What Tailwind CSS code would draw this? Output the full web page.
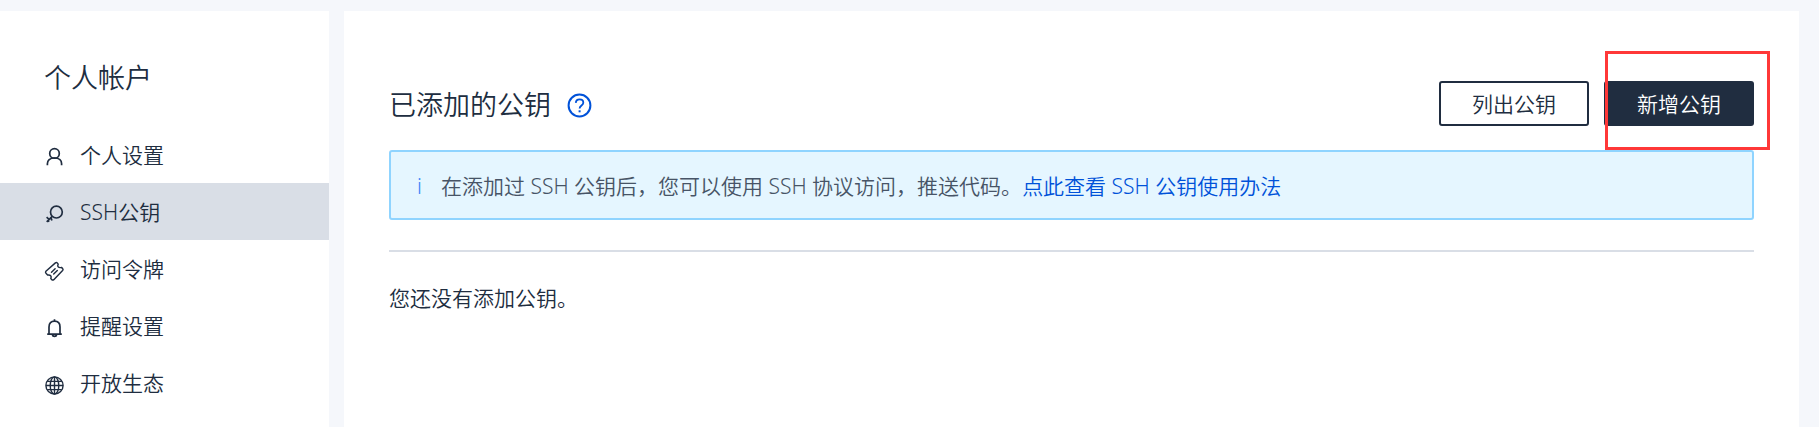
<!DOCTYPE html>
<html lang="zh-CN">
<head>
<meta charset="utf-8">
<title>SSH公钥</title>
<script src="https://cdn.jsdelivr.net/npm/@tailwindcss/browser@4"></script>
</head>
<body class="flex h-[427px] gap-[15px] overflow-hidden bg-[#f5f7fb] pt-[11px] pr-5 font-['Noto_Sans','Noto_Sans_CJK_SC',sans-serif] text-[21px] leading-[28px] font-[350] text-[#202d40]">
<aside class="w-[329px] shrink-0 bg-white">
  <h1 class="flex h-[115px] items-center pt-[19px] pl-[44px] text-[27px]">个人帐户</h1>
  <nav class="flex flex-col">
    <a class="flex h-[57px] items-center gap-[15px] pl-[44px]">
      <svg class="mt-[6px] size-[21px] shrink-0" viewBox="0 0 21 21" fill="none" stroke="currentColor" stroke-width="1.7"><circle cx="10.5" cy="6.4" r="4.8"/><path d="M3.4 18.2v-1.4c0-3.2 2.3-5.8 7.1-5.8s7.1 2.6 7.1 5.8v1.4"/></svg>
      <span>个人设置</span>
    </a>
    <a class="flex h-[57px] items-center gap-[15px] bg-[#d9dee6] pl-[44px]">
      <svg class="mt-[5px] size-[21px] shrink-0" viewBox="0 0 21 21" fill="none" stroke="currentColor" stroke-width="1.7"><circle cx="12.4" cy="8.1" r="5.9"/><path d="M8.2 12.3L2.7 17.8M5.1 15.4l-2.5-2.2M7.1 13.9l.8 2.7M4.1 16.2l.8 1.6"/></svg>
      <span>SSH公钥</span>
    </a>
    <a class="flex h-[57px] items-center gap-[15px] pl-[44px]">
      <svg class="mt-[5px] size-[21px] shrink-0" viewBox="0 0 21 21" fill="none" stroke="currentColor" stroke-width="1.45" stroke-linejoin="round" stroke-linecap="round"><path d="M1.9 10.2L11.4 1.9Q12.6 1.1 13.4 2.1L14.2 3.1Q13.2 5 14.3 6T17.4 6.4L18.7 7.6Q19.5 8.6 18.6 9.6L9.8 18.7Q8.7 19.5 7.8 18.7L6.8 17.6Q7.6 15.7 6.7 14.7T3.6 14L2 12.3Q1.1 11.2 1.9 10.2zM7.5 11.2l3.6-3.4M9.7 13.1l3.6-3.5"/></svg>
      <span>访问令牌</span>
    </a>
    <a class="flex h-[57px] items-center gap-[15px] pl-[44px]">
      <svg class="mt-[5px] size-[21px] shrink-0" viewBox="0 0 21 21" fill="none" stroke="currentColor" stroke-width="1.7"><path d="M5 16V8.9c0-3.6 2.1-5.7 5.5-5.7S16 5.3 16 8.9V16M3.2 16.2h14.6M10.5 3.2V1.3M8.3 16.5c.4 2.5 4 2.5 4.4 0"/></svg>
      <span>提醒设置</span>
    </a>
    <a class="flex h-[57px] items-center gap-[15px] pl-[44px]">
      <svg class="mt-[5px] size-[21px] shrink-0" viewBox="0 0 21 21" fill="none" stroke="currentColor" stroke-width="1.4"><circle cx="10.5" cy="10.5" r="8.6"/><ellipse cx="10.5" cy="10.5" rx="4.3" ry="8.6"/><path d="M10.5 2v17M2 10.5h17M3.2 6.4h14.6M3.2 14.6h14.6"/></svg>
      <span>开放生态</span>
    </a>
  </nav>
</aside>
<main class="relative flex-1 bg-white px-[45px] pt-[70px]">
  <header class="flex h-[45px] items-center">
    <h2 class="pt-[2px] text-[27px] leading-[36px]">已添加的公钥</h2>
    <svg class="mt-[3px] ml-[16px] size-[25px]" viewBox="0 0 25 25" fill="none" stroke="#0052d9" stroke-width="2"><circle cx="12.5" cy="12.5" r="10.9"/><path stroke-width="1.8" d="M8.8 9.9c.1-2.2 1.6-3.5 3.8-3.5s3.7 1.3 3.7 3.3c0 2.7-3.7 2.8-3.7 5.7"/><path d="M12.6 17.3v2"/></svg>
    <div class="ml-auto flex gap-[15px]">
      <button class="h-[45px] w-[150px] rounded-[3px] border-2 border-[#202d40] bg-white">列出公钥</button>
      <button class="h-[45px] w-[150px] rounded-[3px] bg-[#202d40] text-white">新增公钥</button>
    </div>
  </header>
  <div class="mt-6 flex h-[70px] items-center rounded-[3px] border-2 border-[#8fd4ff] bg-[#e5f6ff] pt-px pl-[26px] text-[#475466]">
    <span class="w-[24px] text-[#3a82f7]">i</span>
    <p class="whitespace-nowrap">在添加过 SSH 公钥后，您可以使用 SSH 协议访问，推送代码。<a class="text-[#0052d9]">点此查看 SSH 公钥使用办法</a></p>
  </div>
  <hr class="mt-[30px] border-t-2 border-[#d9dee6]">
  <p class="mt-[32px]">您还没有添加公钥。</p>
  <div class="pointer-events-none absolute top-10 right-[29px] h-[99px] w-[165px] border-3 border-[#ff3838]"></div>
</main>
</body>
</html>
